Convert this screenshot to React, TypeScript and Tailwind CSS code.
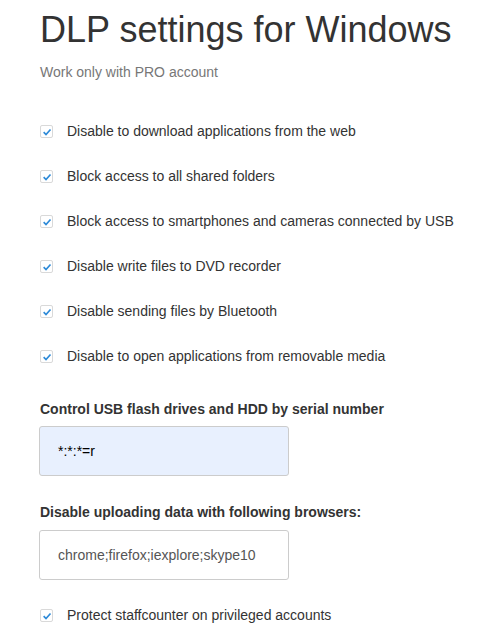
const options = [
  "Disable to download applications from the web",
  "Block access to all shared folders",
  "Block access to smartphones and cameras connected by USB",
  "Disable write files to DVD recorder",
  "Disable sending files by Bluetooth",
  "Disable to open applications from removable media",
];

function Check({ label }: { label: string }) {
  return (
    <label className="flex h-[45px] items-center gap-[14px]">
      <span className="flex h-[13px] w-[13px] shrink-0 items-center justify-center rounded-[2px] border border-[#d9d9d9] bg-white">
        <svg viewBox="0 0 12 12" className="h-[10px] w-[10px]">
          <path d="M2 6.2 L4.8 9 L10.2 3" fill="none" stroke="#2d8ad8" strokeWidth="2" />
        </svg>
      </span>
      <span className="text-[14px] text-[#333]">{label}</span>
    </label>
  );
}

export default function App() {
  return (
    <div className="min-h-screen bg-white pl-[40px] pr-4 font-['Liberation_Sans',Arial,sans-serif] text-[#333]">
      <h1 className="pt-[8px] text-[36px] leading-[44px] font-normal">DLP settings for Windows</h1>
      <p className="mt-[10px] text-[14px] leading-[20px] text-[#777]">Work only with PRO account</p>

      <div className="mt-[27px]">
        {options.map((o) => (
          <Check key={o} label={o} />
        ))}
      </div>

      <h2 className="mt-[20px] text-[14px] leading-[20px] font-bold">Control USB flash drives and HDD by serial number</h2>
      <div className="mt-[7px] -ml-px flex h-[50px] w-[250px] items-center rounded-[3px] border border-[#ccc] bg-[#e8f0fe] px-[18px] text-[14px] text-[#000]">
        *:*:*=r
      </div>

      <h2 className="mt-[26px] text-[14px] leading-[20px] font-bold">Disable uploading data with following browsers:</h2>
      <div className="mt-[8px] -ml-px flex h-[50px] w-[250px] items-center rounded-[3px] border border-[#ccc] bg-white px-[18px] text-[14px] text-[#555]">
        chrome;firefox;iexplore;skype10
      </div>

      <div className="mt-[13px]">
        <Check label="Protect staffcounter on privileged accounts" />
      </div>
    </div>
  );
}
